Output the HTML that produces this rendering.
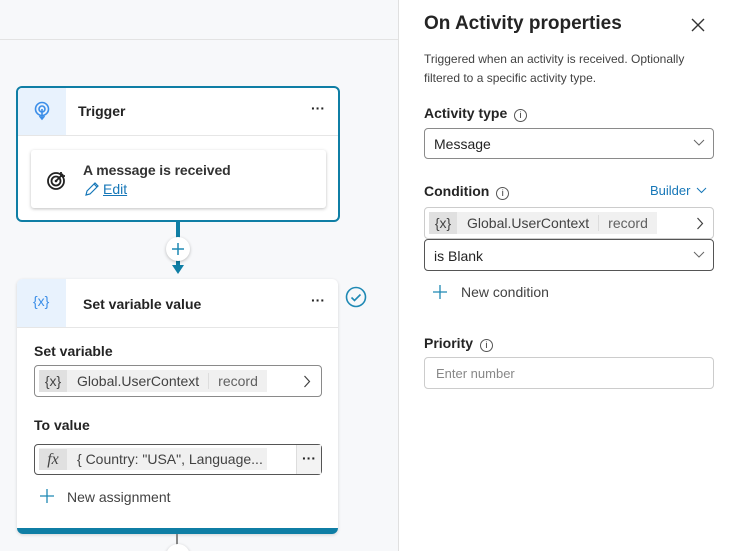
<!DOCTYPE html><html style="width:729px;height:551px;overflow:hidden"><head><style>
*{box-sizing:border-box;margin:0;padding:0}
body{width:729px;height:551px;overflow:hidden;font-family:"Liberation Sans",sans-serif;color:#242424;background:#f7f8fa;position:relative;font-size:14px}
.a{position:absolute}
.card{position:absolute;background:#fff;border-radius:6px}
.inp{position:absolute;border:1px solid #8a8a8a;border-radius:4px;background:#fff}
.chip{position:absolute;background:#f0f0f0;height:22px;top:4px;font-size:14px;color:#424242;line-height:22px}
.lbl{position:absolute;font-weight:bold;font-size:14px}
</style></head><body>
<div class="a" style="left:0;top:0;width:729px;height:551px;overflow:hidden">
<div class="a" style="left:0;top:39px;width:398px;height:1px;background:#e3e3e3"></div>
<!-- trigger -->
<div class="card" style="left:16px;top:86px;width:324px;height:136px;border:2px solid #0f7ea5;"></div>
<div class="a" style="left:18px;top:88px;width:48px;height:48px;background:#e8f2fd;border-top-left-radius:4px"></div>
<svg class="a" style="left:33px;top:101px" width="18" height="20" viewBox="0 0 18 20"><circle cx="9" cy="8" r="6.5" fill="none" stroke="#3b8ee8" stroke-width="1.6"/><circle cx="9" cy="8" r="3" fill="none" stroke="#3b8ee8" stroke-width="1.6"/><path d="M9 8v9M6.5 15l2.5 3 2.5-3" fill="none" stroke="#3b8ee8" stroke-width="1.6"/></svg>
<div class="a" style="left:78px;top:103px;font-weight:bold;font-size:14px">Trigger</div>
<div class="a" style="left:311px;top:100px;font-weight:bold;font-size:14px">···</div>
<div class="a" style="left:18px;top:135px;width:320px;height:1px;background:#e6e6e6"></div>
<div class="card" style="left:31px;top:150px;width:295px;height:58px;border-radius:3px;box-shadow:0 1px 3px rgba(0,0,0,.25)"></div>
<svg class="a" style="left:46px;top:169px" width="22" height="22" viewBox="0 0 22 22"><circle cx="10" cy="12" r="8" fill="none" stroke="#222" stroke-width="1.8"/><circle cx="10" cy="12" r="4.5" fill="none" stroke="#222" stroke-width="1.8"/><circle cx="10" cy="12" r="1.3" fill="#222"/><path d="M10 12l7-7M15 3v4h4" fill="none" stroke="#222" stroke-width="1.8"/></svg>
<div class="a" style="left:83px;top:162px;font-size:14px;color:#333;font-weight:bold;letter-spacing:-.1px">A message is received</div>
<svg class="a" style="left:84px;top:181px" width="16" height="16" viewBox="0 0 16 16"><path d="M2 14l1-4 8-8 3 3-8 8zM10 3l3 3" fill="none" stroke="#1677b8" stroke-width="1.2"/></svg>
<div class="a" style="left:103px;top:181px;font-size:14px;color:#1677b8;text-decoration:underline">Edit</div>
<!-- connector -->
<div class="a" style="left:176px;top:222px;width:4px;height:48px;background:#0f7ea5"></div>
<svg class="a" style="left:171px;top:264px" width="14" height="12"><path d="M1 1h12L7 10z" fill="#0f7ea5"/></svg>
<div class="a" style="left:166px;top:237px;width:24px;height:24px;border-radius:50%;background:#fff;box-shadow:0 1px 3px rgba(0,0,0,.25)"></div>
<svg class="a" style="left:171px;top:242px" width="14" height="14"><path d="M7 1v12M1 7h12" stroke="#1f89b4" stroke-width="1.5"/></svg>
<!-- set var -->
<div class="card" style="left:17px;top:279px;width:321px;height:255px;box-shadow:0 1px 3px rgba(0,0,0,.15);overflow:hidden">
<div class="a" style="left:0;top:0;width:49px;height:48px;background:#e8f2fd"></div>
<div class="a" style="left:16px;top:14px;color:#3b8ee8;font-size:14px">{x}</div>
<div class="a" style="left:66px;top:17px;font-weight:bold">Set variable value</div>
<div class="a" style="left:294px;top:13px;font-weight:bold">···</div>
<div class="a" style="left:0;top:48px;width:321px;height:1px;background:#e6e6e6"></div>
<div class="a" style="left:0;top:249px;width:321px;height:6px;background:#0f7ea5"></div>
</div>
<svg class="a" style="left:345px;top:286px" width="22" height="22"><circle cx="11" cy="11" r="9.5" fill="none" stroke="#1f89b4" stroke-width="1.6"/><path d="M6.5 11.5l3 3 6-6" fill="none" stroke="#1f89b4" stroke-width="1.6"/></svg>
<div class="lbl" style="left:34px;top:343px">Set variable</div>
<div class="inp" style="left:34px;top:365px;width:288px;height:32px">
<div class="chip" style="left:4px;width:228px"><span style="display:inline-block;width:28px;text-align:center;background:#e0e0e0">{x}</span><span style="margin-left:10px">Global.UserContext</span><span style="border-left:1px solid #ddd;margin-left:9px;padding-left:9px;color:#616161">record</span></div>
<svg class="a" style="right:10px;top:9px" width="8" height="13"><path d="M1.5 1l5 5.5-5 5.5" fill="none" stroke="#424242" stroke-width="1.2"/></svg></div>
<div class="lbl" style="left:34px;top:417px">To value</div>
<div class="inp" style="left:34px;top:444px;width:288px;height:31px;border-color:#555">
<div class="chip" style="left:4px;width:228px;top:3px;overflow:hidden;white-space:nowrap"><span style="display:inline-block;width:28px;text-align:center;background:#e0e0e0;font-style:italic;font-family:'Liberation Serif',serif;font-size:16px">fx</span><span style="margin-left:10px">{ Country: "USA", Language...</span></div>
<div class="a" style="right:0;top:0;width:25px;height:29px;background:#f3f3f3;border-left:1px solid #ddd;text-align:center;font-weight:bold;line-height:26px">···</div></div>
<svg class="a" style="left:40px;top:489px" width="14" height="14"><path d="M7 0v14M0 7h14" stroke="#1f89b4" stroke-width="1.3"/></svg>
<div class="a" style="left:67px;top:489px;color:#424242">New assignment</div>
<div class="a" style="left:176px;top:534px;width:2px;height:17px;background:#888"></div>
<div class="a" style="left:166px;top:544px;width:24px;height:24px;border-radius:50%;background:#fff;box-shadow:0 1px 3px rgba(0,0,0,.25)"></div>
<!-- right panel -->
<div class="a" style="left:398px;top:0;width:331px;height:551px;background:#fff;border-left:1px solid #e0e0e0">
<div class="a" style="left:25px;top:13px;font-size:19px;font-weight:bold;color:#242424">On Activity properties</div>
<svg class="a" style="left:292px;top:18px" width="14" height="14"><path d="M1 1l12 12M13 1L1 13" stroke="#333" stroke-width="1.4"/></svg>
<div class="a" style="left:25px;top:50px;font-size:12px;line-height:19px;color:#424242;width:290px">Triggered when an activity is received. Optionally filtered to a specific activity type.</div>
<div class="lbl" style="left:25px;top:105px">Activity type <span style="font-weight:normal;display:inline-block;width:13px;height:13px;border:1px solid #555;border-radius:50%;font-size:9px;text-align:center;line-height:11px;margin-left:3px">i</span></div>
<div class="inp" style="left:25px;top:128px;width:290px;height:31px"><div class="a" style="left:9px;top:7px">Message</div><svg class="a" style="right:8px;top:10px" width="12" height="8"><path d="M1 1l5 5 5-5" fill="none" stroke="#666"/></svg></div>
<div class="lbl" style="left:25px;top:183px">Condition <span style="font-weight:normal;display:inline-block;width:13px;height:13px;border:1px solid #555;border-radius:50%;font-size:9px;text-align:center;line-height:11px;margin-left:3px">i</span></div>
<div class="a" style="left:251px;top:183px;font-size:13px;color:#1677b8">Builder</div>
<svg class="a" style="left:297px;top:187px" width="11" height="7"><path d="M1 1l4.5 4.5L10 1" fill="none" stroke="#1677b8"/></svg>
<div class="inp" style="left:25px;top:207px;width:290px;height:32px;border-color:#ccc">
<div class="chip" style="left:4px;width:228px"><span style="display:inline-block;width:28px;text-align:center;background:#e0e0e0">{x}</span><span style="margin-left:10px">Global.UserContext</span><span style="border-left:1px solid #ddd;margin-left:9px;padding-left:9px;color:#616161">record</span></div>
<svg class="a" style="right:9px;top:9px" width="8" height="13"><path d="M1.5 1l5 5.5-5 5.5" fill="none" stroke="#424242" stroke-width="1.2"/></svg></div>
<div class="inp" style="left:25px;top:239px;width:290px;height:32px;border-color:#555"><div class="a" style="left:9px;top:8px">is Blank</div><svg class="a" style="right:8px;top:11px" width="12" height="8"><path d="M1 1l5 5 5-5" fill="none" stroke="#666"/></svg></div>
<svg class="a" style="left:34px;top:285px" width="14" height="14"><path d="M7 0v14M0 7h14" stroke="#1f89b4" stroke-width="1.3"/></svg>
<div class="a" style="left:62px;top:284px;color:#424242">New condition</div>
<div class="lbl" style="left:25px;top:335px">Priority <span style="font-weight:normal;display:inline-block;width:13px;height:13px;border:1px solid #555;border-radius:50%;font-size:9px;text-align:center;line-height:11px;margin-left:3px">i</span></div>
<div class="inp" style="left:25px;top:357px;width:290px;height:32px;border-color:#ccc"><div class="a" style="left:11px;top:8px;font-size:13px;color:#888">Enter number</div></div>
</div>
</div>
</body></html>
